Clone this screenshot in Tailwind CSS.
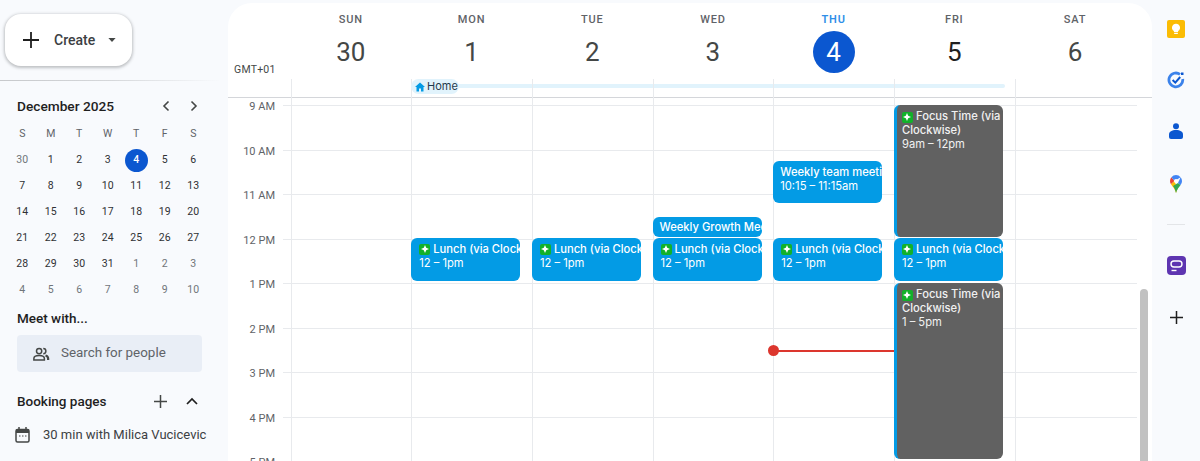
<!DOCTYPE html>
<html lang="en">
<head>
  <meta charset="UTF-8" />
  <title>Calendar</title>
  <script src="https://cdn.jsdelivr.net/npm/@tailwindcss/browser@4"></script>
</head>
<body class="bg-[#f8fafd] font-[Roboto,sans-serif] text-[#1f1f1f] overflow-hidden">
  <div class="flex h-[461px] overflow-hidden">
    <!-- Sidebar -->
    <aside class="w-[228px] shrink-0">
      <div class="pl-[5px] pt-[14px]">
        <button class="flex items-center w-[127px] h-[52px] bg-white rounded-2xl shadow-[0_1px_3px_1px_rgba(60,64,67,0.3)] pl-[17px]">
          <svg class="w-[18px] h-[18px]" viewBox="0 0 18 18" fill="none" stroke="#1f1f1f" stroke-width="1.8"><path d="M9 1v16M1 9h16"/></svg>
          <span class="ml-[14px] text-[14px] font-medium text-[#3c4043]">Create</span>
          <svg class="ml-[13px] w-[8px] h-[4px]" viewBox="0 0 9 5" fill="#444746"><path d="M0 0h9L4.500 5z"/></svg>
        </button>
      </div>
      <div class="mt-[14px] h-px w-[220px] bg-gradient-to-r from-[#c7c9cc] via-[#d5d7da] to-transparent"></div>

      <div class="flex items-center justify-between pl-[17px] pr-[30px] mt-[15px] h-[20px]">
        <span class="text-[13.7px] font-medium text-[#1f1f1f]">December 2025</span>
        <div class="flex items-center gap-[20px]">
          <svg class="w-[8px] h-[12px]" viewBox="0 0 8 12" fill="none" stroke="#444746" stroke-width="1.6"><path d="M6.500 1.500 2 6l4.500 4.500"/></svg>
          <svg class="w-[8px] h-[12px]" viewBox="0 0 8 12" fill="none" stroke="#444746" stroke-width="1.6"><path d="M1.500 1.500 6 6l-4.500 4.500"/></svg>
        </div>
      </div>

      <!-- Mini month -->
      <div class="grid grid-cols-[repeat(7,28.5px)] auto-rows-[26px] pl-[8px] mt-[5px] text-[10.5px] text-[#2f3134] text-center items-center justify-items-center">
        <span class="text-[#5f6368]">S</span><span class="text-[#5f6368]">M</span><span class="text-[#5f6368]">T</span><span class="text-[#5f6368]">W</span><span class="text-[#5f6368]">T</span><span class="text-[#5f6368]">F</span><span class="text-[#5f6368]">S</span>
        <span class="text-[#70757a]">30</span><span>1</span><span>2</span><span>3</span><span class="flex items-center justify-center w-[23px] h-[23px] rounded-full bg-[#0b57d0] text-white font-medium">4</span><span>5</span><span>6</span>
        <span>7</span><span>8</span><span>9</span><span>10</span><span>11</span><span>12</span><span>13</span>
        <span>14</span><span>15</span><span>16</span><span>17</span><span>18</span><span>19</span><span>20</span>
        <span>21</span><span>22</span><span>23</span><span>24</span><span>25</span><span>26</span><span>27</span>
        <span>28</span><span>29</span><span>30</span><span>31</span><span class="text-[#70757a]">1</span><span class="text-[#70757a]">2</span><span class="text-[#70757a]">3</span>
        <span class="text-[#70757a]">4</span><span class="text-[#70757a]">5</span><span class="text-[#70757a]">6</span><span class="text-[#70757a]">7</span><span class="text-[#70757a]">8</span><span class="text-[#70757a]">9</span><span class="text-[#70757a]">10</span>
      </div>

      <div class="pl-[17px] mt-[5px] text-[13.5px] font-medium h-[20px] leading-[20px]">Meet with...</div>
      <div class="ml-[17px] mt-[7px] w-[185px] h-[37px] bg-[#e9eef6] rounded flex items-center pl-[15px]">
        <svg class="w-[18px] h-[18px]" viewBox="0 0 24 24" fill="none" stroke="#444746" stroke-width="2"><circle cx="9.500" cy="8" r="3.500"/><path d="M2.500 20v-2c0-2.500 3.500-4 7-4s7 1.500 7 4v2z"/><path d="M15 4.500a3.500 3.500 0 0 1 0 7"/><path d="M18 14c2 .5 3.500 2 3.500 4v2" stroke-width="3"/></svg>
        <span class="ml-[11px] text-[13.4px] text-[#5f6368]">Search for people</span>
      </div>

      <div class="flex items-center pl-[17px] mt-[19px] h-[20px]">
        <span class="text-[13.5px] font-medium w-[137px]">Booking pages</span>
        <svg class="w-[13px] h-[13px]" viewBox="0 0 13 13" fill="none" stroke="#444746" stroke-width="1.500"><path d="M6.500 0v13M0 6.500h13"/></svg>
        <svg class="ml-[19px] w-[12px] h-[8px]" viewBox="0 0 12 8" fill="none" stroke="#1f1f1f" stroke-width="1.700"><path d="M1 7l5-5 5 5"/></svg>
      </div>
      <div class="flex items-center pl-[15px] mt-[14px] h-[20px]">
        <svg class="w-[15px] h-[16px]" viewBox="0 0 15 16" fill="none"><rect x="1" y="2.500" width="13" height="12.500" rx="1.500" stroke="#444746" stroke-width="1.500"/><path d="M1 2.500h13V6H1z" fill="#444746"/><path d="M4 0v3M11 0v3" stroke="#444746" stroke-width="1.500"/><path d="M4 9h1.500M7 9h1.500M10 9h1.500" stroke="#444746"/></svg>
        <span class="ml-[13px] text-[13px] text-[#3c4043]">30 min with Milica Vucicevic</span>
      </div>
    </aside>

    <!-- Main Calendar -->
    <main class="relative w-[924px] shrink-0 mt-[3px] bg-white rounded-t-[24px] overflow-hidden">
      <!-- Day headers -->
      <div class="grid grid-cols-[62.500px_repeat(7,120.7px)] h-[76px]">
        <div class="flex items-end justify-end pr-[15px] pb-[1px] text-[10.5px] tracking-[0.2px] text-[#444746]">GMT+01</div>
        <div class="flex flex-col items-center pt-[10px]"><span class="text-[11px] leading-[14px] font-medium tracking-[0.8px] text-[#5f6368]">SUN</span><span class="mt-[4px] h-[42px] leading-[42px] text-[26px] text-[#444746]">30</span></div>
        <div class="flex flex-col items-center pt-[10px]"><span class="text-[11px] leading-[14px] font-medium tracking-[0.8px] text-[#5f6368]">MON</span><span class="mt-[4px] h-[42px] leading-[42px] text-[26px] text-[#444746]">1</span></div>
        <div class="flex flex-col items-center pt-[10px]"><span class="text-[11px] leading-[14px] font-medium tracking-[0.8px] text-[#5f6368]">TUE</span><span class="mt-[4px] h-[42px] leading-[42px] text-[26px] text-[#444746]">2</span></div>
        <div class="flex flex-col items-center pt-[10px]"><span class="text-[11px] leading-[14px] font-medium tracking-[0.8px] text-[#5f6368]">WED</span><span class="mt-[4px] h-[42px] leading-[42px] text-[26px] text-[#444746]">3</span></div>
        <div class="flex flex-col items-center pt-[10px]"><span class="text-[11px] leading-[14px] font-semibold tracking-[0.8px] text-[#2f8fe8]">THU</span><span class="mt-[4px] w-[42px] h-[42px] leading-[42px] text-center rounded-full bg-[#0b57d0] text-white text-[26px]">4</span></div>
        <div class="flex flex-col items-center pt-[10px]"><span class="text-[11px] leading-[14px] font-medium tracking-[0.8px] text-[#5f6368]">FRI</span><span class="mt-[4px] h-[42px] leading-[42px] text-[26px] text-[#1f1f1f]">5</span></div>
        <div class="flex flex-col items-center pt-[10px]"><span class="text-[11px] leading-[14px] font-medium tracking-[0.8px] text-[#5f6368]">SAT</span><span class="mt-[4px] h-[42px] leading-[42px] text-[26px] text-[#444746]">6</span></div>
      </div>

      <!-- All day row -->
      <div class="relative h-[19px] border-b border-[#d4d6da]">
        <div class="absolute left-[183px] top-0 flex items-center h-[15px] w-[48px] bg-[#e1f3fc] rounded-full pl-[4px] text-[11px] text-[#1f3a4d] z-10 font-[Inter,sans-serif]">
          <svg class="w-[10px] h-[10px] mr-[2px]" viewBox="0 0 10 10" fill="#039be5"><path d="M5 .5 10 5H8.500v4.500H6V6.500H4v3H1.500V5H0z"/></svg>Home
        </div>
        <div class="absolute left-[200px] top-[5px] w-[577px] h-[4px] bg-[#e1f3fc] rounded-r-full"></div>
      </div>

      <!-- Time grid -->
      <div class="relative pt-[7px]">
        <div class="pl-[55px] pr-[15px]">
          <div class="relative h-[44.5px] border-t border-[#e8eaed]"><span class="absolute -left-[55px] -top-[6px] w-[47px] text-right text-[11px] leading-[14px] text-[#5f6368]">9 AM</span></div>
          <div class="relative h-[44.5px] border-t border-[#e8eaed]"><span class="absolute -left-[55px] -top-[6px] w-[47px] text-right text-[11px] leading-[14px] text-[#5f6368]">10 AM</span></div>
          <div class="relative h-[44.5px] border-t border-[#e8eaed]"><span class="absolute -left-[55px] -top-[6px] w-[47px] text-right text-[11px] leading-[14px] text-[#5f6368]">11 AM</span></div>
          <div class="relative h-[44.5px] border-t border-[#e8eaed]"><span class="absolute -left-[55px] -top-[6px] w-[47px] text-right text-[11px] leading-[14px] text-[#5f6368]">12 PM</span></div>
          <div class="relative h-[44.5px] border-t border-[#e8eaed]"><span class="absolute -left-[55px] -top-[6px] w-[47px] text-right text-[11px] leading-[14px] text-[#5f6368]">1 PM</span></div>
          <div class="relative h-[44.5px] border-t border-[#e8eaed]"><span class="absolute -left-[55px] -top-[6px] w-[47px] text-right text-[11px] leading-[14px] text-[#5f6368]">2 PM</span></div>
          <div class="relative h-[44.5px] border-t border-[#e8eaed]"><span class="absolute -left-[55px] -top-[6px] w-[47px] text-right text-[11px] leading-[14px] text-[#5f6368]">3 PM</span></div>
          <div class="relative h-[44.5px] border-t border-[#e8eaed]"><span class="absolute -left-[55px] -top-[6px] w-[47px] text-right text-[11px] leading-[14px] text-[#5f6368]">4 PM</span></div>
          <div class="relative h-[44.5px] border-t border-[#e8eaed]"><span class="absolute -left-[55px] -top-[6px] w-[47px] text-right text-[11px] leading-[14px] text-[#5f6368]">5 PM</span></div>
        </div>

        <!-- Day columns over the hour rows -->
        <div class="absolute inset-0 -top-[19px] grid grid-cols-[62.500px_repeat(7,120.7px)] font-[Inter,sans-serif] text-white text-[11.2px] leading-[14px]">
          <div></div>
          <div class="border-l border-[#e8eaed]"></div>
          <div class="relative border-l border-[#e8eaed]">
            <div class="absolute -left-px top-[159px] w-[109px] h-[43px] bg-[#039be5] rounded-md px-[8px] pt-[4px] overflow-hidden">
              <div class="flex items-center whitespace-nowrap font-medium"><span class="shrink-0 flex items-center justify-center w-[11px] h-[11px] mr-[3px] bg-[#12b12a] rounded-[2px]"><svg class="w-[8px] h-[8px]" viewBox="0 0 8 8" fill="#fff"><path d="M4 0l1.200 2.800L8 4 5.200 5.200 4 8 2.800 5.200 0 4l2.800-1.200z"/></svg></span>Lunch (via Clockwise)</div>
              <div>12 – 1pm</div>
            </div>
          </div>
          <div class="relative border-l border-[#e8eaed]">
            <div class="absolute -left-px top-[159px] w-[109px] h-[43px] bg-[#039be5] rounded-md px-[8px] pt-[4px] overflow-hidden">
              <div class="flex items-center whitespace-nowrap font-medium"><span class="shrink-0 flex items-center justify-center w-[11px] h-[11px] mr-[3px] bg-[#12b12a] rounded-[2px]"><svg class="w-[8px] h-[8px]" viewBox="0 0 8 8" fill="#fff"><path d="M4 0l1.200 2.800L8 4 5.200 5.200 4 8 2.800 5.200 0 4l2.800-1.200z"/></svg></span>Lunch (via Clockwise)</div>
              <div>12 – 1pm</div>
            </div>
          </div>
          <div class="relative border-l border-[#e8eaed]">
            <div class="absolute -left-px top-[138px] w-[109px] h-[20px] bg-[#039be5] rounded-md px-[7px] pt-[3px] overflow-hidden whitespace-nowrap font-medium">Weekly Growth Meeting</div>
            <div class="absolute -left-px top-[159px] w-[109px] h-[43px] bg-[#039be5] rounded-md px-[8px] pt-[4px] overflow-hidden">
              <div class="flex items-center whitespace-nowrap font-medium"><span class="shrink-0 flex items-center justify-center w-[11px] h-[11px] mr-[3px] bg-[#12b12a] rounded-[2px]"><svg class="w-[8px] h-[8px]" viewBox="0 0 8 8" fill="#fff"><path d="M4 0l1.200 2.800L8 4 5.200 5.200 4 8 2.800 5.200 0 4l2.800-1.200z"/></svg></span>Lunch (via Clockwise)</div>
              <div>12 – 1pm</div>
            </div>
          </div>
          <div class="relative border-l border-[#e8eaed]">
            <div class="absolute -left-px top-[82px] w-[109px] h-[42px] bg-[#039be5] rounded-md px-[7px] pt-[4px] overflow-hidden">
              <div class="whitespace-nowrap font-medium">Weekly team meeting</div>
              <div>10:15 – 11:15am</div>
            </div>
            <div class="absolute -left-px top-[159px] w-[109px] h-[43px] bg-[#039be5] rounded-md px-[8px] pt-[4px] overflow-hidden">
              <div class="flex items-center whitespace-nowrap font-medium"><span class="shrink-0 flex items-center justify-center w-[11px] h-[11px] mr-[3px] bg-[#12b12a] rounded-[2px]"><svg class="w-[8px] h-[8px]" viewBox="0 0 8 8" fill="#fff"><path d="M4 0l1.200 2.800L8 4 5.200 5.200 4 8 2.800 5.200 0 4l2.800-1.200z"/></svg></span>Lunch (via Clockwise)</div>
              <div>12 – 1pm</div>
            </div>
            <!-- Now marker -->
            <div class="absolute -left-[6px] top-[266px] w-[11px] h-[11px] rounded-full bg-[#dc362e]"></div>
            <div class="absolute left-0 top-[271px] w-[121px] h-[2px] bg-[#dc362e]"></div>
          </div>
          <div class="relative border-l border-[#e8eaed]">
            <div class="absolute -left-px top-[26px] w-[109px] h-[132px] bg-[#616161] border-l-[3px] border-[#039be5] rounded-md pl-[5px] pt-[4px] text-[#f1f1f1] overflow-hidden">
              <div class="font-medium"><span class="inline-flex items-center justify-center w-[11px] h-[11px] mr-[3px] align-[-1px] bg-[#12b12a] rounded-[2px]"><svg class="w-[8px] h-[8px]" viewBox="0 0 8 8" fill="#fff"><path d="M4 0l1.200 2.800L8 4 5.200 5.200 4 8 2.800 5.200 0 4l2.800-1.200z"/></svg></span>Focus Time (via Clockwise)</div>
              <div>9am – 12pm</div>
            </div>
            <div class="absolute -left-px top-[159px] w-[109px] h-[43px] bg-[#039be5] rounded-md px-[8px] pt-[4px] overflow-hidden">
              <div class="flex items-center whitespace-nowrap font-medium"><span class="shrink-0 flex items-center justify-center w-[11px] h-[11px] mr-[3px] bg-[#12b12a] rounded-[2px]"><svg class="w-[8px] h-[8px]" viewBox="0 0 8 8" fill="#fff"><path d="M4 0l1.200 2.800L8 4 5.200 5.200 4 8 2.800 5.200 0 4l2.800-1.200z"/></svg></span>Lunch (via Clockwise)</div>
              <div>12 – 1pm</div>
            </div>
            <div class="absolute -left-px top-[204px] w-[109px] h-[176px] bg-[#616161] border-l-[3px] border-[#039be5] rounded-md pl-[5px] pt-[4px] text-[#f1f1f1] overflow-hidden">
              <div class="font-medium"><span class="inline-flex items-center justify-center w-[11px] h-[11px] mr-[3px] align-[-1px] bg-[#12b12a] rounded-[2px]"><svg class="w-[8px] h-[8px]" viewBox="0 0 8 8" fill="#fff"><path d="M4 0l1.200 2.800L8 4 5.200 5.200 4 8 2.800 5.200 0 4l2.800-1.200z"/></svg></span>Focus Time (via Clockwise)</div>
              <div>1 – 5pm</div>
            </div>
          </div>
          <div class="border-l border-[#e8eaed]"></div>
        </div>
      </div>

      <!-- Scrollbar -->
      <div class="absolute right-[4px] top-[286px] bottom-0 w-[8px] bg-[#c1c1c1] rounded-t-full"></div>
    </main>

    <!-- Right rail -->
    <aside class="flex-1 flex flex-col items-center pt-[20px]">
      <div class="flex items-center justify-center w-[18px] h-[18px] rounded-[2px] bg-[#fbbc04]">
        <svg class="w-[10px] h-[13px]" viewBox="0 0 12 14" fill="#fff"><path d="M6 0a4.800 4.800 0 0 0-2.500 8.900V10h5V8.900A4.800 4.800 0 0 0 6 0zM3.800 11h4.400v1.500H3.800z"/></svg>
      </div>
      <svg class="mt-[33px] w-[18px] h-[18px]" viewBox="0 0 18 18" fill="none"><path d="M13 3.400A6.900 6.900 0 1 0 15.700 8" stroke="#3b82ea" stroke-width="2.800"/><path d="M5.600 9 8.300 11.600 13.200 6" stroke="#0b57d0" stroke-width="2"/><path d="M14 1.500h2.500V4H14z" fill="#0b57d0"/></svg>
      <svg class="mt-[34px] w-[14px] h-[16px]" viewBox="0 0 14 16" fill="#0b57d0"><circle cx="7" cy="3.200" r="3"/><path d="M0 14v-2.500C0 8.500 3 7 7 7s7 1.500 7 4.500V14a2 2 0 0 1-2 2H2a2 2 0 0 1-2-2z"/></svg>
      <svg class="mt-[36px] w-[12px] h-[18px]" viewBox="0 0 12 18"><path d="M1.400 2.200A6 6 0 0 0 0 6c0 1.200.4 2.300 1 3.300L4.500 6z" fill="#ea4335"/><path d="M1 9.300c1.200 2 3.800 4 5 8.700L7.500 14 4.500 6z" fill="#fbbc04"/><path d="M6 0a6 6 0 0 0-4.600 2.200L4.500 6 10.600 2.200A6 6 0 0 0 6 0z" fill="#4285f4"/><path d="M3 11c1.200 1.700 2.300 3.500 3 7 .8-3.800 3-5.500 4.600-8L8 8z" fill="#34a853"/><path d="M10.600 2.200A6 6 0 0 1 12 6c0 1.500-.6 2.800-1.400 4L8 8z" fill="#4285f4"/><circle cx="6" cy="6" r="2.100" fill="#fff"/></svg>
      <div class="mt-[31px] w-[18px] h-px bg-[#e3e5e8]"></div>
      <div class="mt-[31px] flex items-center justify-center w-[19px] h-[19px] rounded-[4px] bg-[#5e35b1]">
        <svg class="w-[13px] h-[12px]" viewBox="0 0 13 12" fill="none" stroke="#fff" stroke-width="1.400"><rect x="1" y="1" width="11" height="6" rx="3"/><path d="M1.500 10.500h5"/></svg>
      </div>
      <svg class="mt-[36px] w-[13px] h-[13px]" viewBox="0 0 13 13" fill="none" stroke="#1f1f1f" stroke-width="1.500"><path d="M6.500 0v13M0 6.500h13"/></svg>
    </aside>
  </div>
</body>
</html>
